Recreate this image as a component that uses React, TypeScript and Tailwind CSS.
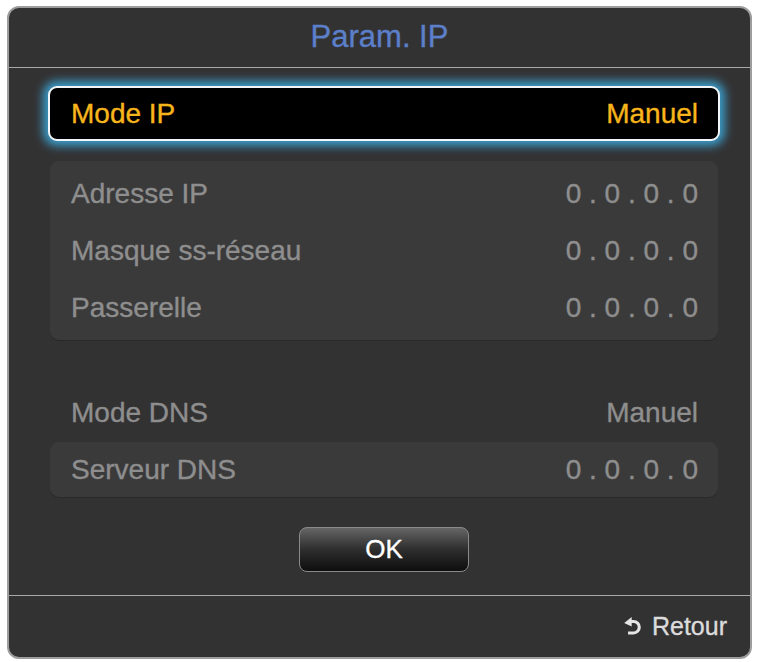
import React from 'react';

const font = { fontFamily: '"Liberation Sans", Arial, sans-serif' };

const Row: React.FC<{ label: string; value: string; className?: string }> = ({ label, value, className }) => (
  <div className={`flex items-center justify-between pl-[21px] pr-[20px] text-[28px] text-[#8e8e8e] ${className ?? ''}`}>
    <span>{label}</span>
    <span className="whitespace-pre">{value}</span>
  </div>
);

const ReturnIcon: React.FC = () => (
  <svg width="20" height="22" viewBox="0 0 18 20" className="mr-[9px] shrink-0">
    <path d="M6.5 5 H9.5 A5.2 5.2 0 1 1 9.5 15.4 H4.5" fill="none" stroke="#e6e6e6" strokeWidth="2.8" />
    <polygon points="1,6.3 7.8,1 7.8,9.6" fill="#e6e6e6" />
  </svg>
);

const App: React.FC = () => {
  return (
    <div className="bg-white min-h-screen pt-[6px] pl-[7px] [-webkit-text-stroke:0.35px_currentColor]" style={font}>
      <div className="w-[745px] h-[653px] flex flex-col rounded-[12px] border-2 border-[#9d9d9d] bg-[#333233] overflow-hidden">
        <header className="h-[60px] flex items-center justify-center border-b border-[#a8a8a8] text-[31px] text-[#5c7fca]">
          Param. IP
        </header>

        <main className="flex flex-col pl-[39px] pr-[30px]">
          <div className="mt-[18px] h-[55px] flex items-center justify-between pl-[21px] pr-[20px] rounded-[9px] border-2 border-[#f2f6f8] bg-black text-[28px] text-[#f7b51c] shadow-[0_0_10px_5px_rgba(60,168,218,0.9)]">
            <span>Mode IP</span>
            <span>Manuel</span>
          </div>

          <div className="mt-[20px] mx-[2px] py-[4px] rounded-[9px] bg-[#3b3a3b] shadow-[0_1px_0_#2a292a]">
            <Row label="Adresse IP" value="0 . 0 . 0 . 0" className="h-[57px]" />
            <Row label="Masque ss-réseau" value="0 . 0 . 0 . 0" className="h-[57px]" />
            <Row label="Passerelle" value="0 . 0 . 0 . 0" className="h-[57px]" />
          </div>

          <Row label="Mode DNS" value="Manuel" className="mt-[45px] h-[56px] mx-[2px]" />

          <div className="mt-[1px] mx-[2px] rounded-[9px] bg-[#3b3a3b] shadow-[0_1px_0_#2a292a]">
            <Row label="Serveur DNS" value="0 . 0 . 0 . 0" className="h-[55px]" />
          </div>

          <div className="mt-[30px] flex justify-center">
            <button className="w-[170px] h-[45px] rounded-[8px] border border-[#8a8a8a] bg-gradient-to-b from-[#666666] via-[#2e2e2e] to-[#0e0e0e] text-[26px] text-white">
              OK
            </button>
          </div>
        </main>

        <footer className="mt-auto h-[62px] border-t border-[#a8a8a8] flex items-center justify-end pr-[23px] text-[25px] text-[#dcdcdc]">
          <ReturnIcon />
          <span>Retour</span>
        </footer>
      </div>
    </div>
  );
};

export default App;
